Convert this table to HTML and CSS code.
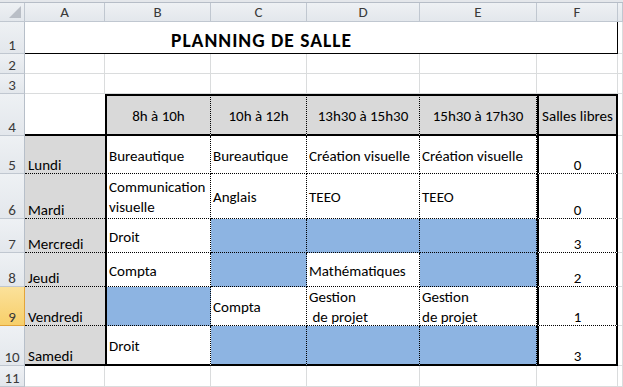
FILE: index.html
```html
<!DOCTYPE html>
<html lang="fr">
<head>
<meta charset="utf-8">
<title>Planning de salle</title>
<link rel="stylesheet" href="styles.css">
</head>
<body>
<div class="topbar"></div>
<div class="sheet">
  <!-- column headers -->
  <div class="corner"><svg width="12" height="12" viewBox="0 0 12 12"><polygon points="12,0 12,12 0,12" fill="#b9bec6"/></svg></div>
  <div class="ch">A</div><div class="ch">B</div><div class="ch">C</div><div class="ch">D</div><div class="ch">E</div><div class="ch">F</div><div class="ch"></div>

  <!-- row 1 -->
  <div class="rh">1</div>
  <div class="c title">PLANNING DE SALLE</div>
  <div class="c"></div>

  <!-- row 2 -->
  <div class="rh">2</div>
  <div class="c"></div><div class="c"></div><div class="c"></div><div class="c"></div><div class="c"></div><div class="c"></div><div class="c"></div>

  <!-- row 3 -->
  <div class="rh">3</div>
  <div class="c"></div><div class="c"></div><div class="c"></div><div class="c"></div><div class="c"></div><div class="c"></div><div class="c"></div>

  <!-- row 4 -->
  <div class="rh">4</div>
  <div class="c day-blank"></div>
  <div class="c hd first">8h à 10h</div>
  <div class="c hd">10h à 12h</div>
  <div class="c hd">13h30 à 15h30</div>
  <div class="c hd">15h30 à 17h30</div>
  <div class="c hd free">Salles libres</div>
  <div class="c"></div>

  <!-- row 5 -->
  <div class="rh">5</div>
  <div class="c day">Lundi</div>
  <div class="c slot first">Bureautique</div>
  <div class="c slot">Bureautique</div>
  <div class="c slot">Création visuelle</div>
  <div class="c slot">Création visuelle</div>
  <div class="c num">0</div>
  <div class="c"></div>

  <!-- row 6 -->
  <div class="rh">6</div>
  <div class="c day">Mardi</div>
  <div class="c slot first">Communication<br>visuelle</div>
  <div class="c slot">Anglais</div>
  <div class="c slot">TEEO</div>
  <div class="c slot">TEEO</div>
  <div class="c num">0</div>
  <div class="c"></div>

  <!-- row 7 -->
  <div class="rh">7</div>
  <div class="c day">Mercredi</div>
  <div class="c slot first">Droit</div>
  <div class="c slot busy"></div>
  <div class="c slot busy"></div>
  <div class="c slot busy"></div>
  <div class="c num">3</div>
  <div class="c"></div>

  <!-- row 8 -->
  <div class="rh">8</div>
  <div class="c day">Jeudi</div>
  <div class="c slot first">Compta</div>
  <div class="c slot busy"></div>
  <div class="c slot">Mathématiques</div>
  <div class="c slot busy"></div>
  <div class="c num">2</div>
  <div class="c"></div>

  <!-- row 9 -->
  <div class="rh active">9</div>
  <div class="c day">Vendredi</div>
  <div class="c slot first busy"></div>
  <div class="c slot">Compta</div>
  <div class="c slot top">Gestion<br>&nbsp;de projet</div>
  <div class="c slot top">Gestion<br>de projet</div>
  <div class="c num">1</div>
  <div class="c"></div>

  <!-- row 10 -->
  <div class="rh">10</div>
  <div class="c day last">Samedi</div>
  <div class="c slot first last">Droit</div>
  <div class="c slot busy last"></div>
  <div class="c slot busy last"></div>
  <div class="c slot busy last"></div>
  <div class="c num last">3</div>
  <div class="c"></div>

  <!-- row 11 -->
  <div class="rh">11</div>
  <div class="c"></div><div class="c"></div><div class="c"></div><div class="c"></div><div class="c"></div><div class="c"></div><div class="c"></div>
</div>
</body>
</html>
```

FILE: styles.css
```css
html, body {
  margin: 0;
  padding: 0;
  background: #ffffff;
  overflow: hidden;
}

body {
  width: 623px;
  height: 387px;
  font-family: "Carlito", "Lato", "Liberation Sans", sans-serif;
  color: #000;
}

.topbar {
  height: 2px;
  background: #e4e7eb;
  border-bottom: 1px solid #b6bdc7;
}

.sheet {
  display: grid;
  grid-template-columns: 25px 80px 106px 96px 113px 117px 81px 1fr;
  grid-template-rows: 19px 32px 20px 20px 42px 38px 45px 34px 34px 39px 40px 21px;
}

.sheet > div {
  box-sizing: border-box;
  min-width: 0;
}

/* headers */
.corner,
.ch,
.rh {
  background: linear-gradient(#eef1f4, #e3e7ec);
  border-right: 1px solid #c0c7d0;
  border-bottom: 1px solid #c0c7d0;
  color: #3a3a3a;
  font-size: 15px;
}

.corner {
  display: flex;
  align-items: flex-end;
  justify-content: flex-end;
  padding: 0 3px 3px 0;
}

.ch {
  display: flex;
  align-items: center;
  justify-content: center;
}

.rh {
  display: flex;
  align-items: flex-end;
  justify-content: center;
  padding-bottom: 0;
  line-height: 16px;
  border-right-color: #b7bfc9;
}

.rh.active {
  background: linear-gradient(#fbe19a, #f7cf6a);
  border-right-color: #e2a43a;
  border-bottom-color: #e2a43a;
}

/* cells */
.c {
  border-right: 1px solid #dadcdd;
  border-bottom: 1px solid #dadcdd;
  font-size: 15px;
  line-height: 20px;
  padding: 0 2px;
  white-space: nowrap;
  overflow: visible;
  display: flex;
  flex-direction: column;
  justify-content: center;
}

.title {
  grid-column: span 6;
  border-right: 1px solid #000;
  border-bottom: 1px solid #000;
  font-weight: bold;
  font-size: 19.5px;
  letter-spacing: 1px;
  justify-content: flex-end;
  padding-left: 146px;
  padding-bottom: 3px;
}

.day-blank {
  border-right: none;
  border-bottom: 2px solid #000;
}

.day {
  background: #d9d9d9;
  border-right: none;
  border-bottom: 1px dotted #000;
  justify-content: flex-end;
  padding-left: 3px;
  padding-bottom: 0;
  line-height: 16px;
}

.hd {
  background: #d9d9d9;
  border-top: 2px solid #000;
  border-bottom: 2px solid #000;
  border-right: 1px dotted #000;
  align-items: center;
  padding-top: 2px;
}

.hd.first,
.slot.first {
  border-left: 2px solid #000;
}

.hd.free {
  border-left: 2px solid #000;
  border-right: 2px solid #000;
}

.slot {
  border-right: 1px dotted #000;
  border-bottom: 1px dotted #000;
  padding-left: 2px;
  padding-top: 2px;
}

.slot.top {
  justify-content: flex-start;
  padding-top: 0;
}

.busy {
  background: #8db4e2;
}

.num {
  border-left: 2px solid #000;
  border-right: 2px solid #000;
  border-bottom: 1px dotted #000;
  align-items: center;
  justify-content: flex-end;
  padding-bottom: 0;
  line-height: 16px;
}

.last {
  border-bottom: 2px solid #000;
}
```
